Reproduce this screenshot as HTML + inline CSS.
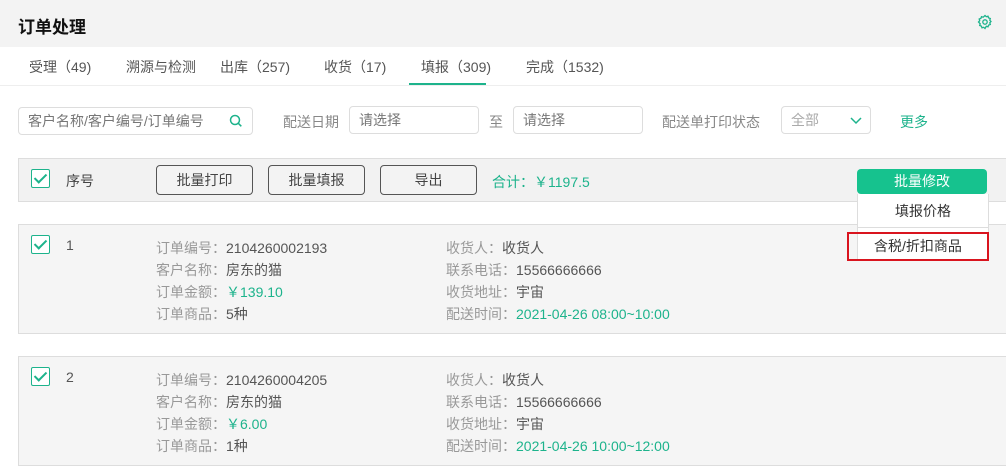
<!DOCTYPE html>
<html><head><meta charset="utf-8"><style>
*{margin:0;padding:0;box-sizing:border-box}
body{width:1006px;height:468px;overflow:hidden;background:#fff;font-family:"Liberation Sans","Noto Sans CJK SC",sans-serif;font-size:14px;color:#555;position:relative}
.a{position:absolute;white-space:nowrap}
.g{color:#1db38c}
.inp{position:absolute;border:1px solid #ddd;border-radius:4px;height:28px;line-height:26px;padding-left:9px;color:#777;background:#fff}
.btn{position:absolute;border:1px solid #555;border-radius:4px;height:30px;line-height:28px;text-align:center;color:#444;background:#f3f3f3;width:97px}
.cb{position:absolute;width:19px;height:19px;border:1.5px solid #1db38c;border-radius:2px;background:#fff}
.cb:after{content:"";position:absolute;left:5px;top:1px;width:5px;height:10px;border-right:2px solid #1db38c;border-bottom:2px solid #1db38c;transform:rotate(45deg)}
.card{position:absolute;left:18px;width:990px;height:110px;background:#f5f5f5;border:1px solid #ddd}
.lbl{color:#999}
</style></head><body>
<div class="a" style="left:0;top:0;width:1006px;height:47px;background:#f3f3f3"></div>
<div class="a" style="left:18px;top:13px;font-size:17px;font-weight:bold;color:#111">订单处理</div>
<svg class="a" style="left:977px;top:14px" width="16" height="16" viewBox="0 0 16 16"><path d="M8 1.5l1.3 1.2 1.7-.5.6 1.7 1.7.6-.5 1.7 1.2 1.3-1.2 1.3.5 1.7-1.7.6-.6 1.7-1.7-.5L8 14.5 6.7 13.3l-1.7.5-.6-1.7-1.7-.6.5-1.7L1.5 8l1.2-1.3-.5-1.7 1.7-.6.6-1.7 1.7.5z" fill="none" stroke="#1db38c" stroke-width="1.3"/><circle cx="8" cy="8" r="2.2" fill="none" stroke="#1db38c" stroke-width="1.3"/></svg>

<div class="a" style="left:0;top:85px;width:1006px;height:1px;background:#eee"></div>
<div class="a" style="left:29px;top:57px">受理（49)</div>
<div class="a" style="left:126px;top:57px">溯源与检测</div>
<div class="a" style="left:220px;top:57px">出库（257)</div>
<div class="a" style="left:324px;top:57px">收货（17)</div>
<div class="a" style="left:421px;top:57px">填报（309)</div>
<div class="a" style="left:409px;top:83px;width:77px;height:2px;background:#1db38c"></div>
<div class="a" style="left:526px;top:57px">完成（1532)</div>

<div class="inp" style="left:18px;top:107px;width:235px">客户名称/客户编号/订单编号</div>
<svg class="a" style="left:229px;top:114px" width="14" height="14" viewBox="0 0 14 14"><circle cx="6" cy="6" r="4.5" fill="none" stroke="#1db38c" stroke-width="1.5"/><path d="M9.3 9.3l3 3" stroke="#1db38c" stroke-width="1.5"/></svg>
<div class="a" style="left:283px;top:112px;color:#888">配送日期</div>
<div class="inp" style="left:349px;top:106px;width:130px">请选择</div>
<div class="a" style="left:489px;top:112px;color:#888">至</div>
<div class="inp" style="left:513px;top:106px;width:130px">请选择</div>
<div class="a" style="left:662px;top:112px;color:#888">配送单打印状态</div>
<div class="inp" style="left:781px;top:106px;width:90px;color:#aaa">全部</div>
<svg class="a" style="left:850px;top:116px" width="12" height="9" viewBox="0 0 12 9"><path d="M1 2l5 5 5-5" fill="none" stroke="#1db38c" stroke-width="1.5"/></svg>
<div class="a g" style="left:900px;top:112px">更多</div>

<div class="a" style="left:18px;top:158px;width:990px;height:44px;background:#f2f2f2;border:1px solid #ddd"></div>
<div class="cb" style="left:31px;top:169px"></div>
<div class="a" style="left:66px;top:171px;color:#444">序号</div>
<div class="btn" style="left:156px;top:165px">批量打印</div>
<div class="btn" style="left:268px;top:165px">批量填报</div>
<div class="btn" style="left:380px;top:165px">导出</div>
<div class="a g" style="left:492px;top:172px">合计：￥1197.5</div>

<div class="card" style="top:224px"></div>
<div class="cb" style="left:31px;top:235px"></div>
<div class="a" style="left:66px;top:237px">1</div>
<div class="a" style="left:156px;top:237px;line-height:22px"><span class="lbl">订单编号：</span>2104260002193<br><span class="lbl">客户名称：</span>房东的猫<br><span class="lbl">订单金额：</span><span class="g">￥139.10</span><br><span class="lbl">订单商品：</span>5种</div>
<div class="a" style="left:446px;top:237px;line-height:22px"><span class="lbl">收货人：</span>收货人<br><span class="lbl">联系电话：</span>15566666666<br><span class="lbl">收货地址：</span>宇宙<br><span class="lbl">配送时间：</span><span class="g">2021-04-26 08:00~10:00</span></div>

<div class="card" style="top:356px"></div>
<div class="cb" style="left:31px;top:367px"></div>
<div class="a" style="left:66px;top:369px">2</div>
<div class="a" style="left:156px;top:369px;line-height:22px"><span class="lbl">订单编号：</span>2104260004205<br><span class="lbl">客户名称：</span>房东的猫<br><span class="lbl">订单金额：</span><span class="g">￥6.00</span><br><span class="lbl">订单商品：</span>1种</div>
<div class="a" style="left:446px;top:369px;line-height:22px"><span class="lbl">收货人：</span>收货人<br><span class="lbl">联系电话：</span>15566666666<br><span class="lbl">收货地址：</span>宇宙<br><span class="lbl">配送时间：</span><span class="g">2021-04-26 10:00~12:00</span></div>

<div class="a" style="left:857px;top:169px;width:130px;height:25px;background:#16c28e;border-radius:4px;color:#fff;text-align:center;line-height:25px">批量修改</div>
<div class="a" style="left:857px;top:194px;width:132px;height:66px;background:#fff;border:1px solid #ddd;border-top:none"></div>
<div class="a" style="left:857px;top:201px;width:132px;text-align:center;color:#333">填报价格</div>
<div class="a" style="left:857px;top:227px;width:132px;height:1px;background:#ddd"></div>
<div class="a" style="left:847px;top:232px;width:142px;height:29px;border:2px solid #d9141e"></div>
<div class="a" style="left:847px;top:236px;width:142px;text-align:center;color:#333">含税/折扣商品</div>
</body></html>
